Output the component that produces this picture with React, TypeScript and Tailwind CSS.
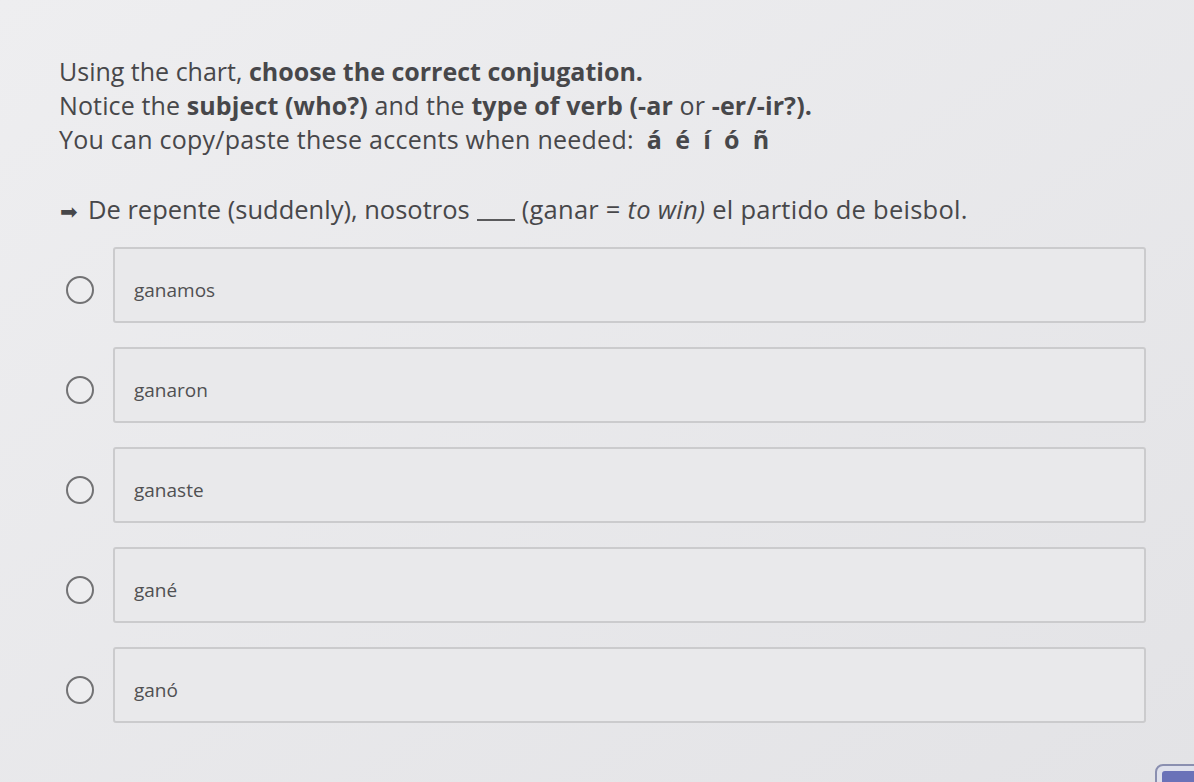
import { useState } from 'react'

const options = ['ganamos', 'ganaron', 'ganaste', 'gané', 'ganó']
const accents = ['á', 'é', 'í', 'ó', 'ñ']

export default function App() {
  const [picked, setPicked] = useState<number | null>(null)

  return (
    <div
      className="relative h-[782px] w-[1194px] overflow-hidden bg-gradient-to-br from-[#eeeef0] to-[#e3e3e6] text-[#47474a]"
      style={{ fontFamily: '"Open Sans", "Liberation Sans", sans-serif' }}
    >
      <div className="pl-[59px] pr-[40px] pt-[54px]">
        <div className="text-[25px] leading-[34px]">
          <p>
            Using the chart, <b className="font-bold">choose the correct conjugation.</b>
          </p>
          <p className="tracking-[0.005em]">
            Notice the <b className="font-bold">subject (who?)</b> and the{' '}
            <b className="font-bold">type of verb (-ar</b> or <b className="font-bold">-er/-ir?).</b>
          </p>
          <p className="flex items-baseline tracking-[0.01em]">
            <span>You can copy/paste these accents when needed:</span>
            <span className="ml-[13px] flex gap-[13px] font-bold">
              {accents.map((a) => (
                <span key={a}>{a}</span>
              ))}
            </span>
          </p>
        </div>

        <p className="mt-[36px] flex items-baseline whitespace-nowrap text-[25.5px] leading-[34px]">
          <span className="ml-[1px] mr-[10px] text-[21px]">➡</span>
          <span>De repente (suddenly), nosotros</span>
          <span className="ml-[7px] mr-[7px] inline-block w-[38px] border-b-2 border-[#5a5a5c] leading-[20px]">&nbsp;</span>
          <span className="tracking-[0.01em]">
            (ganar = <i>to win)</i> el partido de beisbol.
          </span>
        </p>

        <div className="ml-[7px] mt-[19px] flex flex-col gap-[24px]">
          {options.map((o, i) => (
            <button
              key={o}
              onClick={() => setPicked(i)}
              className="flex items-center gap-[19px] text-left"
            >
              <span className="mt-[10px] flex h-[28px] w-[28px] shrink-0 items-center justify-center rounded-full border-2 border-[#727274] bg-[#ededef]">
                {picked === i && <span className="h-[13px] w-[13px] rounded-full bg-[#4b4b4d]" />}
              </span>
              <span className="flex h-[76px] w-[1033px] items-center rounded-[3px] border-2 border-[#cbcbcd] bg-[#e9e9eb] pl-[19px] pt-[10px] text-[19px] text-[#505052]">
                {o}
              </span>
            </button>
          ))}
        </div>
      </div>

      <div className="absolute left-[1155px] top-[764px] h-[30px] w-[60px] rounded-[8px] border-2 border-[#8a8fb0] bg-[#dfe1ec] p-[5px]">
        <div className="h-full w-full rounded-[3px] bg-[#6a72b8]" />
      </div>
    </div>
  )
}
